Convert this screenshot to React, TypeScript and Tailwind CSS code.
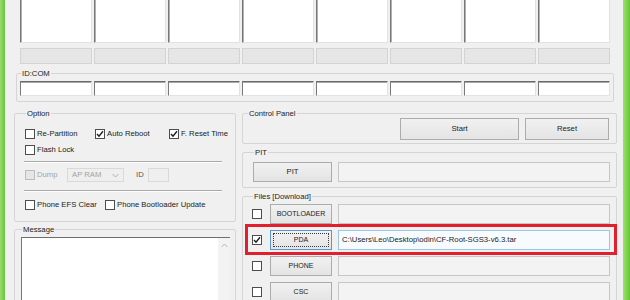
import type { ReactNode } from 'react';

const cols = [0, 1, 2, 3, 4, 5, 6, 7];

function Box({ checked = false, disabled = false }: { checked?: boolean; disabled?: boolean }) {
  return (
    <span
      className={`flex h-[10px] w-[10px] shrink-0 items-center justify-center border ${
        disabled ? 'border-[#bcbcbc] bg-[#e6e6e6]' : 'border-[#4d4d4d] bg-white'
      }`}
    >
      {checked && (
        <svg width="8" height="8" viewBox="0 0 8 8">
          <polyline points="1,4 3,6.2 7,1.2" fill="none" stroke="#1e1e1e" strokeWidth="1.4" />
        </svg>
      )}
    </span>
  );
}

function Check({ label, checked, disabled, w }: { label: string; checked?: boolean; disabled?: boolean; w: string }) {
  return (
    <div className={`flex items-center gap-[2px] ${w}`}>
      <Box checked={checked} disabled={disabled} />
      <span className={disabled ? 'text-[#a3a3a3]' : ''}>{label}</span>
    </div>
  );
}

function Group({ title, className, children }: { title: string; className: string; children: ReactNode }) {
  return (
    <fieldset className={`shrink-0 rounded-[2px] border border-[#d5d5d5] ${className}`}>
      <legend className="ml-[1px] px-[1px] leading-[9px]">{title}</legend>
      {children}
    </fieldset>
  );
}

function Btn({ label, w, small, focused }: { label: string; w: string; small?: boolean; focused?: boolean }) {
  return (
    <div
      className={`flex h-[20px] shrink-0 items-center justify-center border bg-gradient-to-b from-[#f1f1f1] to-[#e4e4e4] ${w} ${
        small ? 'text-[7px]' : ''
      } ${focused ? 'border-[#5c98cf] p-[2px]' : 'border-[#acacac]'}`}
    >
      {focused ? (
        <span className="flex h-full w-full items-center justify-center border border-dotted border-[#3a3a3a]">{label}</span>
      ) : (
        label
      )}
    </div>
  );
}

function Field({ text, active }: { text?: string; active?: boolean }) {
  return (
    <div
      className={`flex h-[20px] w-[272px] shrink-0 items-center border px-[3px] ${
        active ? 'border-[#9cc6e8] bg-[#f8fbfd]' : 'border-[#c6c6c6] bg-[#f3f3f3]'
      }`}
    >
      {text}
    </div>
  );
}

function FileRow({ label, text, checked, focused }: { label: string; text?: string; checked?: boolean; focused?: boolean }) {
  return (
    <div className="flex h-[20px] shrink-0 items-center">
      <Box checked={checked} />
      <div className="ml-[8px]">
        <Btn label={label} w="w-[62px]" small focused={focused} />
      </div>
      <div className="ml-[6px]">
        <Field text={text} active={focused} />
      </div>
    </div>
  );
}

export default function App() {
  return (
    <div className="flex h-[300px] w-[630px] overflow-hidden font-['Liberation_Sans',Arial,sans-serif] text-[7.7px] text-[#222]">
      <div className="w-[5px] shrink-0 bg-gradient-to-r from-[#9bdc70] to-[#6cc23e]" />
      <div className="relative flex w-[618px] shrink-0 flex-col overflow-hidden bg-[#f0f0f0]">
        {/* device slots */}
        <div className="ml-[15px] flex h-[43px] shrink-0 gap-[2px]">
          {cols.map((i) => (
            <div
              key={i}
              className="w-[72px] border-b border-l border-r border-b-[#e2e2e2] border-l-[#777] border-r-[#e2e2e2] bg-white shadow-[inset_1px_0_0_#b0b0b0]"
            />
          ))}
        </div>
        <div className="ml-[15px] mt-[5px] flex h-[16px] shrink-0 gap-[2px]">
          {cols.map((i) => (
            <div key={i} className="w-[72px] border border-[#d3d3d3] bg-[#e6e6e6]" />
          ))}
        </div>
        <Group title="ID:COM" className="ml-[11px] mt-[5px] w-[598px] pb-[5px] pl-[3px]">
          <div className="mt-[3px] flex h-[15px] gap-[2px]">
            {cols.map((i) => (
              <div
                key={i}
                className="w-[72px] border border-b-[#e3e3e3] border-l-[#7a7a7a] border-r-[#e3e3e3] border-t-[#6a6a6a] bg-white shadow-[inset_0_1px_0_#a8a8a8]"
              />
            ))}
          </div>
        </Group>

        <div className="ml-[9px] mt-[7px] flex shrink-0 gap-[6px]">
          {/* left column */}
          <div className="flex w-[222px] shrink-0 flex-col">
            <Group title="Option" className="pb-[9px] pl-[10px]">
              <div className="mt-[9px] flex h-[14px] items-center">
                <Check label="Re-Partition" w="w-[70px]" />
                <Check label="Auto Reboot" checked w="w-[74px]" />
                <Check label="F. Reset Time" checked w="w-[60px]" />
              </div>
              <div className="mt-[2px] flex h-[14px] items-center">
                <Check label="Flash Lock" w="w-[70px]" />
              </div>
              <div className="-ml-[1px] mt-[4px] h-[2px] w-[198px] border-b border-t border-b-white border-t-[#a9a9a9]" />
              <div className="mt-[5px] flex h-[14px] items-center">
                <Check label="Dump" disabled w="w-[42px]" />
                <div className="flex h-[14px] w-[57px] items-center justify-between border border-[#d9d9d9] bg-[#efefef] pl-[4px] pr-[4px] text-[#a3a3a3]">
                  <span>AP RAM</span>
                  <svg width="7" height="5" viewBox="0 0 7 5">
                    <polyline points="0.5,1 3.5,4 6.5,1" fill="none" stroke="#b0b0b0" strokeWidth="1" />
                  </svg>
                </div>
                <span className="ml-[12px] w-[12px] text-[#555]">ID</span>
                <div className="h-[14px] w-[21px] border border-[#d9d9d9] bg-[#efefef]" />
              </div>
              <div className="-ml-[1px] mt-[8px] h-[2px] w-[198px] border-b border-t border-b-white border-t-[#a9a9a9]" />
              <div className="mt-[6px] flex h-[14px] items-center">
                <Check label="Phone EFS Clear" w="w-[80px]" />
                <Check label="Phone Bootloader Update" w="w-[110px]" />
              </div>
            </Group>
            <Group title="Message" className="mt-[3px] pl-[6px]">
              <div className="mt-[3px] flex h-[80px] w-[209px] border-l border-t border-l-[#777] border-t-[#6e6e6e] bg-white">
                <div className="flex-1" />
                <div className="flex w-[12px] justify-center bg-[#f3f3f3] pt-[5px]">
                  <svg width="7" height="5" viewBox="0 0 7 5">
                    <polyline points="0.5,4 3.5,1 6.5,4" fill="none" stroke="#b5b5b5" strokeWidth="1" />
                  </svg>
                </div>
              </div>
            </Group>
          </div>

          {/* right column */}
          <div className="flex w-[375px] shrink-0 flex-col">
            <Group title="Control Panel" className="pb-[3px] pl-[4px] pr-[7px]">
              <div className="flex justify-end gap-[6px]">
                <div className="flex h-[22px] w-[119px] items-center justify-center border border-[#acacac] bg-gradient-to-b from-[#f1f1f1] to-[#e4e4e4]">
                  Start
                </div>
                <div className="flex h-[22px] w-[84px] items-center justify-center border border-[#acacac] bg-gradient-to-b from-[#f1f1f1] to-[#e4e4e4]">
                  Reset
                </div>
              </div>
            </Group>
            <Group title="PIT" className="mt-[4px] pb-[5px] pl-[10px]">
              <div className="mt-[5px] flex items-center gap-[6px]">
                <Btn label="PIT" w="w-[79px]" />
                <Field />
              </div>
            </Group>
            <Group title="Files [Download]" className="mt-[4px] pb-[6px] pl-[9px]">
              <div className="mt-[3px] flex flex-col gap-[6px]">
                <FileRow label="BOOTLOADER" />
                <FileRow label="PDA" checked focused text="C:\Users\Leo\Desktop\odin\CF-Root-SGS3-v6.3.tar" />
                <FileRow label="PHONE" />
                <FileRow label="CSC" />
              </div>
            </Group>
          </div>
        </div>

        {/* highlight annotation */}
        <div className="absolute left-[240px] top-[224px] h-[31px] w-[372px] border-[3px] border-[#e0202c]" />
      </div>
      <div className="w-[7px] shrink-0 bg-gradient-to-r from-[#9be36b] to-[#63c72c]" />
    </div>
  );
}
